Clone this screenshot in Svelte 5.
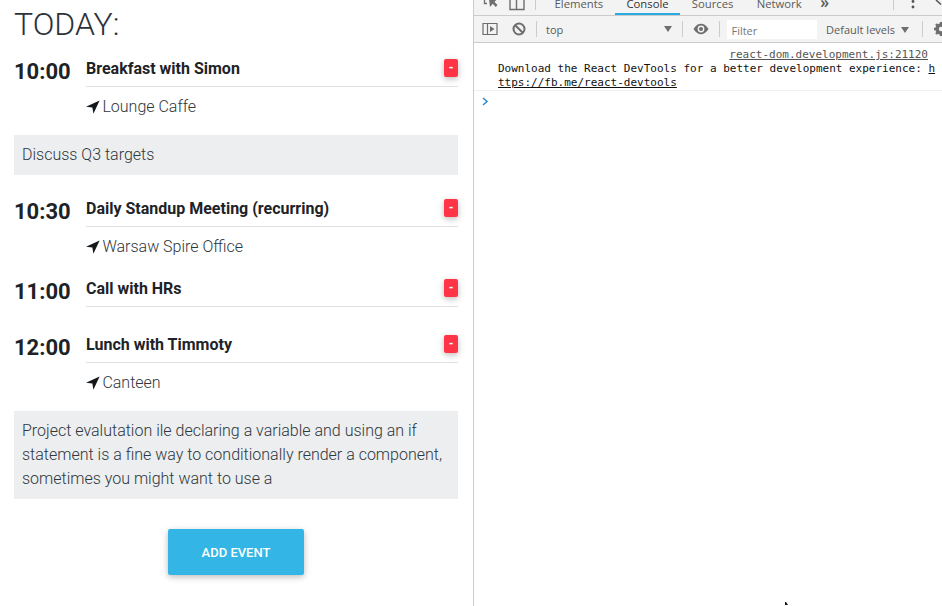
<script>
  const events = [
    { time: "10:00", title: "Breakfast with Simon", location: "Lounge Caffe", note: "Discuss Q3 targets" },
    { time: "10:30", title: "Daily Standup Meeting (recurring)", location: "Warsaw Spire Office" },
    { time: "11:00", title: "Call with HRs" },
    {
      time: "12:00",
      title: "Lunch with Timmoty",
      location: "Canteen",
      note: "Project evalutation ile declaring a variable and using an if statement is a fine way to conditionally render a component, sometimes you might want to use a"
    }
  ];
  const tabs = ["Elements", "Console", "Sources", "Network"];
</script>

<main class="screen">
  <section class="app">
    <h1>TODAY:</h1>
    {#each events as ev}
      <div class="event">
        <div class="time">{ev.time}</div>
        <div class="details">
          <div class="head">
            <span class="title">{ev.title}</span>
            <button class="remove">-</button>
          </div>
          {#if ev.location}
            <div class="location">
              <svg width="14" height="14" viewBox="0 0 14 14"><path d="M13.6 .4 0 6.8 6.4 7.6 7.4 13.8Z" fill="#14171a" /></svg>
              {ev.location}
            </div>
          {/if}
        </div>
      </div>
      {#if ev.note}
        <p class="note">{ev.note}</p>
      {/if}
    {/each}
    <button class="add">ADD EVENT</button>
  </section>

  <section class="devtools">
    <div class="tabbar">
      <svg class="ic-inspect" width="16" height="15" viewBox="0 0 16 15">
        <path d="M1.5 0V4.5H4" fill="none" stroke="#6e6e6e" stroke-width="1.3" />
        <path d="M6 0H14L11.5 3 14.5 6 12.8 8 9.8 4.8 7 8Z" fill="#6e6e6e" />
      </svg>
      <svg class="ic-device" width="16" height="15" viewBox="0 0 16 15">
        <path d="M1 0V9.5H15V0M7.5 0V9.5" fill="none" stroke="#6e6e6e" stroke-width="1.4" />
      </svg>
      <span class="sep tabsep"></span>
      <div class="tabs">
        {#each tabs as t}
          <span class="tab" class:active={t === "Console"}>{t}</span>
        {/each}
      </div>
      <span class="more">»</span>
      <span class="spring"></span>
      <span class="sep"></span>
      <svg class="ic-dots" width="4" height="15" viewBox="0 0 4 15">
        <circle cx="2" cy="1.5" r="1.4" fill="#555" /><circle cx="2" cy="7" r="1.4" fill="#555" />
      </svg>
      <svg class="ic-close" width="10" height="15" viewBox="0 0 10 15">
        <path d="M1 0 6 4.5M9 0 7.5 1.5" stroke="#555" stroke-width="1.6" fill="none" />
      </svg>
    </div>

    <div class="toolbar">
      <svg class="ic-sidebar" width="16" height="14" viewBox="0 0 16 14">
        <path d="M1 1.5H15V12.5H1ZM5.5 1.5V12.5" fill="none" stroke="#6e6e6e" stroke-width="1.2" />
        <path d="M8 4 12.5 7 8 10Z" fill="#6e6e6e" />
      </svg>
      <svg class="ic-clear" width="14" height="14" viewBox="0 0 14 14">
        <circle cx="7" cy="7" r="5.5" fill="none" stroke="#6e6e6e" stroke-width="2" />
        <path d="M3.2 3.2 10.8 10.8" stroke="#6e6e6e" stroke-width="2" />
      </svg>
      <span class="sep tall after-clear"></span>
      <div class="context">
        <span>top</span>
        <span class="arrow"></span>
      </div>
      <span class="sep tall"></span>
      <svg class="ic-eye" width="16" height="12" viewBox="0 0 16 12">
        <path d="M.5 6C3 2 5.5 .8 8 .8S13 2 15.5 6C13 10 10.5 11.2 8 11.2S3 10 .5 6Z" fill="#6e6e6e" />
        <circle cx="8" cy="6" r="3.4" fill="#f3f3f3" /><circle cx="8" cy="6" r="2" fill="#6e6e6e" />
      </svg>
      <span class="sep tall after-eye"></span>
      <div class="filter">Filter</div>
      <div class="levels">Default levels<span class="arrow"></span></div>
      <span class="sep tall after-levels"></span>
      <svg class="ic-gear" width="14" height="14" viewBox="0 0 14 14">
        <circle cx="7" cy="7" r="4.2" fill="none" stroke="#6e6e6e" stroke-width="3" />
        <path d="M7 0V14M0 7H14M2 2 12 12M12 2 2 12" stroke="#6e6e6e" stroke-width="2.4" />
        <circle cx="7" cy="7" r="2.2" fill="#f3f3f3" />
      </svg>
    </div>

    <div class="message">
      <div class="source">react-dom.development.js:21120</div>
      <div class="text">Download the React DevTools for a better development experience: <u>https://fb.me/react-devtools</u></div>
    </div>
    <div class="prompt">
      <svg width="7" height="9" viewBox="0 0 7 9"><path d="M1 1 5 4.5 1 8" fill="none" stroke="#2d8fd5" stroke-width="1.6" /></svg>
    </div>
    <svg class="cursor" width="8" height="4" viewBox="0 0 8 4"><path d="M1 0H2L4 3H1Z" fill="#111" /></svg>
  </section>
</main>

<style>
  :global(body) {
    background: #fff;
  }
  .screen {
    display: flex;
    width: 942px;
    height: 606px;
    overflow: hidden;
    font-family: Roboto, sans-serif;
  }
  /* left pane */
  .app {
    box-sizing: border-box;
    width: 474px;
    padding: 0 15px 0 14px;
    border-right: 1px solid #ccc;
    color: #1d2327;
  }
  h1 {
    margin: 0;
    height: 50px;
    font-size: 32px;
    font-weight: 300;
    line-height: 48px;
    color: #2b3238;
  }
  .event {
    display: flex;
    margin-bottom: 11px;
  }
  .time {
    width: 72px;
    font-size: 22px;
    font-weight: 700;
    line-height: 43px;
    color: #1d2327;
  }
  .details {
    flex: 1;
  }
  .head {
    display: flex;
    justify-content: space-between;
    align-items: center;
    height: 36px;
    border-bottom: 1px solid #e2e2e2;
    margin-bottom: 8px;
  }
  .title {
    font-size: 16px;
    font-weight: 700;
  }
  .remove {
    width: 14px;
    height: 18px;
    padding: 0;
    border: 0;
    border-radius: 2px;
    background: #ff3547;
    color: #fff;
    font: 700 12px/18px Roboto, sans-serif;
    box-shadow: 0 2px 5px rgba(0, 0, 0, 0.16), 0 2px 10px rgba(0, 0, 0, 0.12);
  }
  .location {
    height: 24px;
    font-size: 16px;
    font-weight: 300;
    line-height: 24px;
    color: #2f363c;
  }
  .location svg {
    vertical-align: -2px;
    margin-right: -1.5px;
  }
  .note {
    margin: 16px 0 15px;
    padding: 8px;
    background: #eceef0;
    font-size: 16px;
    font-weight: 300;
    line-height: 24px;
    color: #2f363c;
  }
  .add {
    display: block;
    width: 136px;
    height: 46px;
    margin: 30px auto 0;
    padding: 0;
    border: 0;
    border-radius: 2px;
    background: #33b5e5;
    color: #fff;
    font: 500 13px Roboto, sans-serif;
    box-shadow: 0 2px 5px rgba(0, 0, 0, 0.16), 0 2px 10px rgba(0, 0, 0, 0.12);
  }
  /* devtools */
  .devtools {
    position: relative;
    flex: 1;
    min-width: 0;
    font-family: "Open Sans", sans-serif;
    font-size: 11px;
    color: #5a5a5a;
  }
  .tabbar,
  .toolbar {
    display: flex;
    background: #f3f3f3;
    border-bottom: 1px solid #ccc;
  }
  .tabbar {
    height: 15px;
    overflow: hidden;
    align-items: flex-start;
  }
  .toolbar {
    height: 26px;
    align-items: center;
  }
  .ic-inspect {
    margin: -1px 0 0 9px;
    flex: none;
  }
  .ic-device {
    margin: 0 0 0 10px;
    flex: none;
  }
  .sep {
    width: 1px;
    height: 10px;
    background: #ccc;
    flex: none;
  }
  .tabsep {
    margin-left: 10px;
  }
  .tall {
    height: 16px;
  }
  .tabs {
    display: flex;
    margin-left: 7px;
  }
  .tab {
    box-sizing: border-box;
    height: 15px;
    padding: 0 11.6px;
    font-size: 11.3px;
    line-height: 7px;
    white-space: nowrap;
  }
  .tab.active {
    color: #333;
    border-bottom: 2px solid #29abe2;
  }
  .more {
    margin-left: 7px;
    font-size: 16px;
    font-weight: 600;
    line-height: 5px;
  }
  .spring {
    flex: 1;
  }
  .ic-dots {
    margin-left: 17px;
    flex: none;
  }
  .ic-close {
    margin: 0 -3px 0 20px;
    flex: none;
  }
  .ic-sidebar {
    margin-left: 8px;
    flex: none;
  }
  .ic-clear {
    margin-left: 14px;
    flex: none;
  }
  .after-clear {
    margin-left: 10px;
  }
  .context {
    display: flex;
    align-items: center;
    justify-content: space-between;
    box-sizing: border-box;
    width: 146px;
    padding: 0 10px 0 9px;
  }
  .arrow {
    display: inline-block;
    border-left: 4px solid transparent;
    border-right: 4px solid transparent;
    border-top: 6px solid #6e6e6e;
  }
  .ic-eye {
    margin-left: 10px;
    flex: none;
  }
  .after-eye {
    margin-left: 10px;
  }
  .filter {
    box-sizing: border-box;
    width: 90px;
    height: 19px;
    margin-left: 7px;
    padding-left: 4px;
    background: #fff;
    color: #777;
    line-height: 21px;
  }
  .levels {
    margin-left: 9px;
    white-space: nowrap;
  }
  .levels .arrow {
    margin-left: 6px;
    vertical-align: 1px;
  }
  .after-levels {
    margin-left: 13px;
  }
  .ic-gear {
    margin: 0 -6px 0 11px;
    flex: none;
  }
  .message {
    box-sizing: border-box;
    height: 48px;
    padding: 5px 5px 0 24px;
    border-bottom: 1px solid #f0f0f0;
    font-family: "DejaVu Sans Mono", monospace;
    font-size: 11px;
    line-height: 14px;
    color: #111;
    word-break: break-all;
  }
  .source {
    margin-right: 9px;
    text-align: right;
    color: #555;
    text-decoration: underline;
  }
  .prompt {
    padding: 4px 0 0 8px;
    line-height: 14px;
  }
  .cursor {
    position: absolute;
    left: 310px;
    bottom: 0;
  }
</style>
